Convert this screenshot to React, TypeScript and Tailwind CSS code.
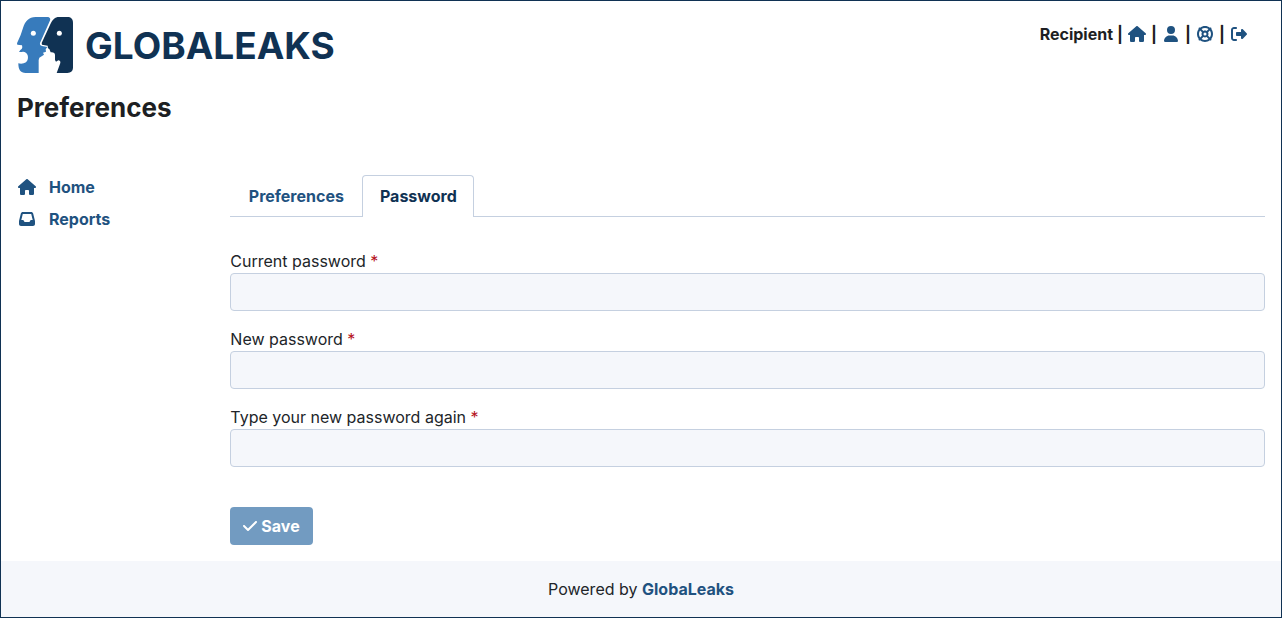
import { FaCheck, FaHouse, FaInbox, FaLifeRing, FaRightFromBracket, FaUser } from "react-icons/fa6";

const link = "font-bold text-[#1f5280] hover:underline";

function Logo() {
  return (
    <a href="#home" className="flex w-fit items-center gap-3" aria-label="GlobaLeaks">
      <svg viewBox="0 0 168 168" className="size-14" aria-hidden="true">
        <path
          fill="#377bbc"
          d="M56 0H90C99 0 102 5 98 13L69 78C68 83 70 86 75 87L91 90L86 97L87 104L78 107L81 113L67 122L65 129V168H26C10 168 4 158 4 139C12 141 21 140 27 136C33 131 34 122 32 115C29 107 22 103 15 105L6 105L10 99L14 96L16 91L15 85L1 83L0 79L11 54L18 33C25 12 35 0 56 0Z"
        />
        <path
          fill="#103253"
          d="M126 0H151C162 0 168 6 168 17V151C168 162 162 168 151 168H119L130 138C131 133 128 130 124 130L117 134L114 129V114C114 108 109 105 101 106L97 96L93 94L92 86L75 83L74 78L100 22C106 8 114 0 126 0Z"
        />
        <circle cx="49" cy="49" r="7.5" fill="#fff" />
        <circle cx="127" cy="49" r="7.5" fill="#fff" />
      </svg>
      <span className="text-[37px] leading-none font-bold text-[#103253]">GLOBALEAKS</span>
    </a>
  );
}

const actions = [
  { name: "Home", icon: <FaHouse className="h-4 w-[18px]" /> },
  { name: "Preferences", icon: <FaUser /> },
  { name: "Support", icon: <FaLifeRing /> },
  { name: "Logout", icon: <FaRightFromBracket /> },
];

const fields = [
  { id: "current", label: "Current password" },
  { id: "new", label: "New password" },
  { id: "confirm", label: "Type your new password again" },
];

export default function App() {
  return (
    <div className="flex min-h-screen flex-col border border-[#103253] bg-white font-[Inter,sans-serif] text-base text-[#212529]">
      <header className="px-4 pt-4">
        <div className="flex items-start justify-between">
          <Logo />
          <div className="flex items-center pt-[5px] pr-4 font-bold text-[#1d1f23]">
            <span>Recipient</span>
            {actions.map(({ name, icon }) => (
              <span key={name} className="flex items-center">
                <span className="w-[14px] text-center">|</span>
                <a href={"#" + name.toLowerCase()} aria-label={name} className="flex w-5 justify-center text-[#1f5280]">
                  {icon}
                </a>
              </span>
            ))}
          </div>
        </div>
        <h1 className="mt-4 text-[26px] leading-[38px] font-bold text-[#1d1f23]">Preferences</h1>
      </header>

      <div className="mt-12 flex grow">
        <nav className="w-1/6 pl-4">
          <a href="#home" className={"flex h-6 items-center gap-3 " + link}>
            <span className="flex w-5 justify-center"><FaHouse className="h-4 w-[18px]" /></span>
            Home
          </a>
          <a href="#reports" className={"mt-2 flex h-6 items-center gap-3 " + link}>
            <span className="flex w-5 justify-center"><FaInbox /></span>
            Reports
          </a>
        </nav>

        <main className="grow px-4 pb-4">
          <div role="tablist" className="flex border-b border-[#c5d0e0]">
            <button role="tab" aria-selected="false" className="w-[132px] pt-[9px] pb-2 font-bold text-[#1f5280]">
              Preferences
            </button>
            <button
              role="tab"
              aria-selected="true"
              className="-mb-px w-28 rounded-t border border-b-0 border-[#c5d0e0] bg-white pt-2 pb-[9px] font-bold text-[#103253]"
            >
              Password
            </button>
          </div>

          <form className="mt-8" onSubmit={(e) => e.preventDefault()}>
            <div className="flex flex-col gap-4">
              {fields.map(({ id, label }) => (
                <div key={id}>
                  <label htmlFor={id} className="block">
                    {label} <span className="text-[#b5121b]">*</span>
                  </label>
                  <input
                    id={id}
                    type="password"
                    required
                    className="block h-[38px] w-full rounded border border-[#c5d0e0] bg-[#f5f7fb] px-3"
                  />
                </div>
              ))}
            </div>
            <button
              type="submit"
              disabled
              className="mt-10 flex h-[38px] items-center gap-1 rounded bg-[#729bc1] px-[13px] font-bold text-white"
            >
              <FaCheck className="h-4 w-[14px]" />
              Save
            </button>
          </form>
        </main>
      </div>

      <footer className="bg-[#f5f7fb] py-4 text-center">
        Powered by <a href="#globaleaks" className={link}>GlobaLeaks</a>
      </footer>
    </div>
  );
}
